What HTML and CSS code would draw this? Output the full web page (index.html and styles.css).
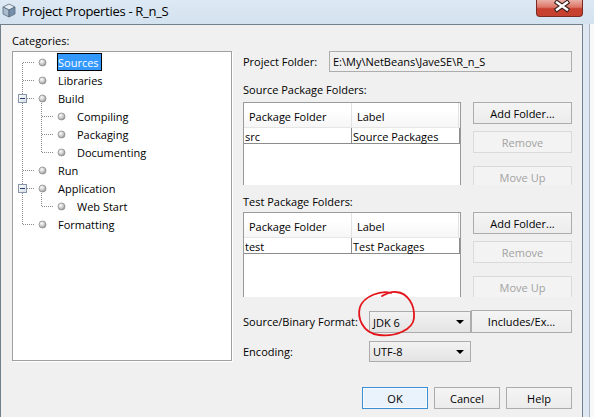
FILE: index.html
```html
<!DOCTYPE html>
<html>
<head>
<meta charset="utf-8">
<title>Project Properties - R_n_S</title>
<link rel="stylesheet" href="styles.css">
</head>
<body>
<svg class="defs" width="0" height="0" aria-hidden="true">
  <defs>
    <radialGradient id="bulg" cx="0.38" cy="0.35" r="0.7">
      <stop offset="0" stop-color="#ffffff"/>
      <stop offset="0.6" stop-color="#c4c4c4"/>
      <stop offset="1" stop-color="#8e8e8e"/>
    </radialGradient>
    <linearGradient id="expg" x1="0" y1="0" x2="1" y2="1">
      <stop offset="0" stop-color="#ffffff"/>
      <stop offset="1" stop-color="#d6dde6"/>
    </linearGradient>
  </defs>
</svg>
<div class="screen">
  <div class="titlebar">
    <svg class="app-icon" viewBox="0 0 14 15">
      <polygon points="7,1 13,4 7,7 1,4" fill="#e4ebf2" stroke="#5a6b7c" stroke-width="0.8" stroke-linejoin="round"/>
      <polygon points="1,4 7,7 7,14 1,11" fill="#a9bccf" stroke="#5a6b7c" stroke-width="0.8" stroke-linejoin="round"/>
      <polygon points="13,4 7,7 7,14 13,11" fill="#7590ad" stroke="#5a6b7c" stroke-width="0.8" stroke-linejoin="round"/>
    </svg>
    <span class="title">Project Properties - R_n_S</span>
    <div class="close">
      <svg viewBox="0 0 47 17" width="47" height="17">
        <path d="M21 3.5 L31 10.5 M31 3.5 L21 10.5" stroke="#3b2220" stroke-width="4.6" stroke-linecap="square"/>
        <path d="M21 3.5 L31 10.5 M31 3.5 L21 10.5" stroke="#ffffff" stroke-width="2.4" stroke-linecap="square"/>
      </svg>
    </div>
  </div>
  <div class="frame-row">
    <div class="dialog">
      <div class="main">
        <div class="left">
          <div class="caption">Categories:</div>
          <div class="tree">
            <div class="node">
              <svg class="guide g0" viewBox="0 0 44 18">
                <line class="dot" x1="9.5" y1="10" x2="9.5" y2="18"/>
                <line class="dot" x1="10" y1="9.5" x2="21" y2="9.5"/>
                <circle class="bul" cx="29.5" cy="9.5" r="3.5"/>
              </svg>
              <span class="lbl sel">Sources</span>
            </div>
            <div class="node">
              <svg class="guide g0" viewBox="0 0 44 18">
                <line class="dot" x1="9.5" y1="0" x2="9.5" y2="18"/>
                <line class="dot" x1="10" y1="9.5" x2="21" y2="9.5"/>
                <circle class="bul" cx="29.5" cy="9.5" r="3.5"/>
              </svg>
              <span class="lbl">Libraries</span>
            </div>
            <div class="node">
              <svg class="guide g0" viewBox="0 0 44 18">
                <line class="dot" x1="9.5" y1="0" x2="9.5" y2="18"/>
                <line class="dot" x1="14" y1="9.5" x2="21" y2="9.5"/>
                <line class="dot" x1="28.5" y1="14" x2="28.5" y2="18"/>
                <rect x="5.5" y="5.5" width="8" height="8" fill="url(#expg)" stroke="#8796a8"/>
                <line x1="7" y1="9.5" x2="12" y2="9.5" stroke="#24406e"/>
                <circle class="bul" cx="29.5" cy="9.5" r="3.5"/>
              </svg>
              <span class="lbl">Build</span>
            </div>
            <div class="node">
              <svg class="guide g1" viewBox="0 0 63 18">
                <line class="dot" x1="9.5" y1="0" x2="9.5" y2="18"/>
                <line class="dot" x1="28.5" y1="0" x2="28.5" y2="18"/>
                <line class="dot" x1="29" y1="9.5" x2="40" y2="9.5"/>
                <circle class="bul" cx="48.5" cy="9.5" r="3.5"/>
              </svg>
              <span class="lbl">Compiling</span>
            </div>
            <div class="node">
              <svg class="guide g1" viewBox="0 0 63 18">
                <line class="dot" x1="9.5" y1="0" x2="9.5" y2="18"/>
                <line class="dot" x1="28.5" y1="0" x2="28.5" y2="18"/>
                <line class="dot" x1="29" y1="9.5" x2="40" y2="9.5"/>
                <circle class="bul" cx="48.5" cy="9.5" r="3.5"/>
              </svg>
              <span class="lbl">Packaging</span>
            </div>
            <div class="node">
              <svg class="guide g1" viewBox="0 0 63 18">
                <line class="dot" x1="9.5" y1="0" x2="9.5" y2="18"/>
                <line class="dot" x1="28.5" y1="0" x2="28.5" y2="10"/>
                <line class="dot" x1="29" y1="9.5" x2="40" y2="9.5"/>
                <circle class="bul" cx="48.5" cy="9.5" r="3.5"/>
              </svg>
              <span class="lbl">Documenting</span>
            </div>
            <div class="node">
              <svg class="guide g0" viewBox="0 0 44 18">
                <line class="dot" x1="9.5" y1="0" x2="9.5" y2="18"/>
                <line class="dot" x1="10" y1="9.5" x2="21" y2="9.5"/>
                <circle class="bul" cx="29.5" cy="9.5" r="3.5"/>
              </svg>
              <span class="lbl">Run</span>
            </div>
            <div class="node">
              <svg class="guide g0" viewBox="0 0 44 18">
                <line class="dot" x1="9.5" y1="0" x2="9.5" y2="18"/>
                <line class="dot" x1="14" y1="9.5" x2="21" y2="9.5"/>
                <line class="dot" x1="28.5" y1="14" x2="28.5" y2="18"/>
                <rect x="5.5" y="5.5" width="8" height="8" fill="url(#expg)" stroke="#8796a8"/>
                <line x1="7" y1="9.5" x2="12" y2="9.5" stroke="#24406e"/>
                <circle class="bul" cx="29.5" cy="9.5" r="3.5"/>
              </svg>
              <span class="lbl">Application</span>
            </div>
            <div class="node">
              <svg class="guide g1" viewBox="0 0 63 18">
                <line class="dot" x1="9.5" y1="0" x2="9.5" y2="18"/>
                <line class="dot" x1="28.5" y1="0" x2="28.5" y2="10"/>
                <line class="dot" x1="29" y1="9.5" x2="40" y2="9.5"/>
                <circle class="bul" cx="48.5" cy="9.5" r="3.5"/>
              </svg>
              <span class="lbl">Web Start</span>
            </div>
            <div class="node">
              <svg class="guide g0" viewBox="0 0 44 18">
                <line class="dot" x1="9.5" y1="0" x2="9.5" y2="10"/>
                <line class="dot" x1="10" y1="9.5" x2="21" y2="9.5"/>
                <circle class="bul" cx="29.5" cy="9.5" r="3.5"/>
              </svg>
              <span class="lbl">Formatting</span>
            </div>
          </div>
        </div>

        <div class="right">
          <div class="field-row">
            <span class="flabel">Project Folder:</span>
            <div class="textfield">E:\My\NetBeans\JaveSE\R_n_S</div>
          </div>

          <div class="section-label first">Source Package Folders:</div>
          <div class="pkg-section s1">
            <div class="table">
              <div class="thead">
                <div class="th c1">Package Folder</div>
                <div class="th c2">Label</div>
              </div>
              <div class="trow">
                <div class="td c1">src</div>
                <div class="td c2">Source Packages</div>
              </div>
            </div>
            <div class="side-buttons">
              <button class="btn">Add Folder...</button>
              <button class="btn disabled gap-small">Remove</button>
              <button class="btn disabled gap-big">Move Up</button>
            </div>
          </div>

          <div class="section-label second">Test Package Folders:</div>
          <div class="pkg-section s2">
            <div class="table">
              <div class="thead">
                <div class="th c1">Package Folder</div>
                <div class="th c2">Label</div>
              </div>
              <div class="trow">
                <div class="td c1">test</div>
                <div class="td c2">Test Packages</div>
              </div>
            </div>
            <div class="side-buttons">
              <button class="btn">Add Folder...</button>
              <button class="btn disabled gap-small">Remove</button>
              <button class="btn disabled gap-big">Move Up</button>
            </div>
          </div>

          <div class="combo-row format">
            <span class="clabel">Source/Binary Format:</span>
            <div class="combo"><span>JDK 6</span><i class="arrow"></i></div>
            <button class="btn includes">Includes/Ex...</button>
          </div>
          <div class="combo-row encoding">
            <span class="clabel">Encoding:</span>
            <div class="combo"><span>UTF-8</span><i class="arrow"></i></div>
          </div>
        </div>
      </div>

      <div class="footer">
        <button class="btn fbtn default">OK</button>
        <button class="btn fbtn">Cancel</button>
        <button class="btn fbtn">Help</button>
      </div>
    </div>
    <div class="frame-side"></div>
  </div>
</div>
<svg class="annotation" viewBox="0 0 64 50" width="64" height="50">
  <path d="M36 5 C26 2 9 8 5 19 C2 29 7 45 24 47 C40 49 58 42 59 30 C60 17 53 5 41 4 C35 3 31 6 27 8" fill="none" stroke="#e3151a" stroke-width="1.8" stroke-linecap="round"/>
</svg>
</body>
</html>
```

FILE: styles.css
```css
* { box-sizing: border-box; }
html, body { margin: 0; padding: 0; }
body {
  width: 594px;
  height: 417px;
  overflow: hidden;
  position: relative;
  font-family: "Open Sans", "Noto Sans", sans-serif;
  font-size: 11px;
  color: #000;
  background: #dbe7f2;
}
.defs { position: absolute; width: 0; height: 0; }
.screen { width: 594px; height: 417px; display: flex; flex-direction: column; }

.titlebar {
  height: 24px;
  flex: none;
  display: flex;
  align-items: flex-start;
  padding: 0 11px 0 2px;
  background: linear-gradient(#dde9f4, #d3e2ef);
}
.app-icon { width: 14px; height: 15px; margin-top: 3px; flex: none; }
.title { margin-left: 6px; font-size: 13px; letter-spacing: -0.3px; line-height: 23px; color: #000; }
.close {
  margin-left: auto;
  width: 47px;
  height: 17px;
  border: 1px solid #7a2a22;
  border-top: none;
  border-radius: 0 0 4px 4px;
  background: linear-gradient(#eab0a6 0%, #dd7566 45%, #c9402f 55%, #c6412f 100%);
  overflow: hidden;
}
.close svg { display: block; margin: -1px 0 0 -1px; }

.frame-row { flex: 1; display: flex; }
.dialog {
  width: 583px;
  flex: none;
  background: #f0f0f0;
  border: 1px solid #71808b;
  border-bottom: none;
  display: flex;
  flex-direction: column;
}
.frame-side {
  flex: 1;
  background: linear-gradient(to right, #dde8f2 0, #dde8f2 6px, #a9b7c3 6px, #a9b7c3 7px, #f8f8f8 7px);
}

.main { height: 337px; display: flex; flex: none; }
.left { width: 231px; flex: none; padding: 9px 0 0 11px; }
.caption { line-height: 14px; height: 14px; }
.tree {
  margin-top: 3px;
  height: 310px;
  border: 1px solid #a0a0a0;
  background: #fff;
  box-shadow: 1px 1px 0 #fff;
  padding-top: 1px;
}
.node { display: flex; height: 18px; align-items: flex-start; }
.guide { display: block; height: 18px; flex: none; }
.guide.g0 { width: 44px; }
.guide.g1 { width: 63px; }
.dot { stroke: #8a8a8a; stroke-width: 1; stroke-dasharray: 1 1; shape-rendering: crispEdges; }
.bul { fill: url(#bulg); stroke: #8f8f8f; stroke-width: 0.8; }
.lbl {
  display: block;
  height: 18px;
  line-height: 17px;
  border: 1px solid transparent;
  padding: 0 2px 0 0;
  white-space: nowrap;
}
.lbl.sel { background: #3399ff; color: #fff; border-color: #000; }

.right { flex: 1; padding: 26px 10px 0 11px; display: flex; flex-direction: column; }
.field-row { display: flex; height: 21px; align-items: center; }
.flabel { width: 86px; flex: none; }
.textfield {
  flex: 1;
  height: 21px;
  border: 1px solid #adadad;
  background: #f0f0f0;
  padding-left: 3px;
  line-height: 19px;
  white-space: nowrap;
}
.section-label { line-height: 14px; height: 14px; }
.section-label.first { margin-top: 11px; }
.section-label.second { margin-top: 10px; }

.pkg-section { display: flex; gap: 12px; overflow: hidden; flex: none; }
.pkg-section.s1 { margin-top: 5px; height: 83px; }
.pkg-section.s2 { margin-top: 3px; height: 85px; }
.table {
  width: 218px;
  flex: none;
  height: 100px;
  border: 1px solid #9a9a9a;
  border-bottom: none;
  background: #fff;
}
.thead {
  display: flex;
  height: 25px;
  background: linear-gradient(#ffffff 0%, #ffffff 30%, #f6f6f6 100%);
  border-bottom: 1px solid #e6e6e6;
}
.th { padding: 4px 0 0 5px; line-height: 20px; white-space: nowrap; }
.th.c1 { width: 108px; border-right: 1px solid #e2e2e2; }
.th.c2 { width: 107px; border-right: 1px solid #e2e2e2; }
.trow { display: flex; height: 16px; }
.td {
  padding: 1px 0 0 1px;
  line-height: 15px;
  border-right: 1px solid #8c8c8c;
  border-bottom: 1px solid #8c8c8c;
  white-space: nowrap;
}
.td.c1 { width: 108px; }
.td.c2 { width: 108px; }

.side-buttons { width: 99px; flex: none; display: flex; flex-direction: column; }
.btn {
  font: inherit;
  color: #000;
  height: 22px;
  padding: 0;
  border: 1px solid #acacac;
  background: linear-gradient(#f4f4f4, #ececec);
  display: block;
  flex: none;
}
.side-buttons .btn { width: 99px; }
.btn.disabled { color: #a2a2a2; border-color: #dadada; background: #f3f3f3; }
.gap-small { margin-top: 7px; }
.gap-big { margin-top: 13px; }

.combo-row { display: flex; align-items: flex-start; flex: none; }
.combo-row.format { margin-top: 13px; height: 23px; }
.combo-row.encoding { margin-top: 8px; height: 21px; }
.clabel { width: 126px; flex: none; align-self: center; }
.combo {
  width: 102px;
  flex: none;
  display: flex;
  align-items: center;
  border: 1px solid #acacac;
  background: linear-gradient(#f2f2f2, #e4e4e4);
  padding-left: 3px;
}
.format .combo { height: 22px; margin-top: 1px; }
.encoding .combo { height: 21px; }
.arrow {
  margin-left: auto;
  margin-right: 6px;
  width: 0;
  height: 0;
  border-left: 4px solid transparent;
  border-right: 4px solid transparent;
  border-top: 4px solid #000;
}
.btn.includes { width: 101px; height: 23px; }

.footer {
  display: flex;
  justify-content: flex-end;
  gap: 6px;
  padding: 25px 10px 0 0;
}
.fbtn { width: 66px; height: 22px; }
.fbtn.default { border-color: #3c8fd3; background: #eaf3fb; box-shadow: inset 0 0 0 1px #f7fbff; }

.annotation { position: absolute; left: 355px; top: 288px; pointer-events: none; }
```
